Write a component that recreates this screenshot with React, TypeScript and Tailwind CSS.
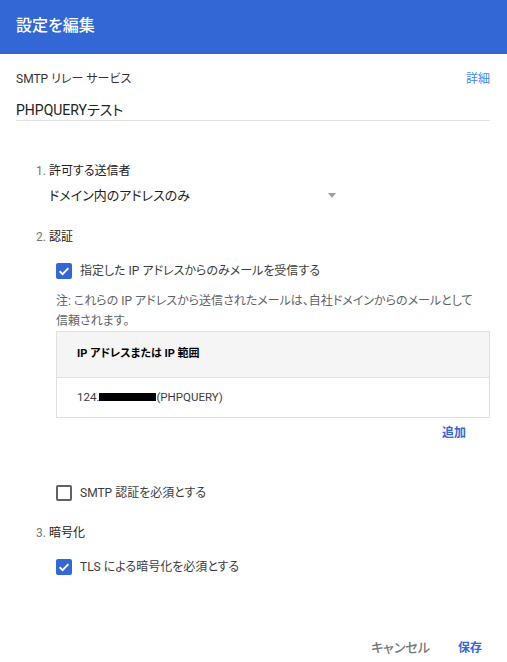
const palt = "[font-feature-settings:'palt']";

function Check({ on }: { on: boolean }) {
  if (!on) {
    return <span className="block h-4 w-4 shrink-0 rounded-[2px] border-2 border-[#616161] bg-white" />;
  }
  return (
    <span className="flex h-4 w-4 shrink-0 items-center justify-center rounded-[2px] bg-[#3367d6]">
      <svg viewBox="0 0 16 16" className="h-4 w-4" fill="none">
        <path d="M3.6 8.2 L6.6 11.1 L12.4 5.2" stroke="white" strokeWidth="1.9" />
      </svg>
    </span>
  );
}

function CheckRow({ on, label }: { on: boolean; label: string }) {
  return (
    <div className="flex h-5 items-center gap-2 pl-5">
      <Check on={on} />
      <span className="text-[12px] leading-5 text-[#3c3c3c]">{label}</span>
    </div>
  );
}

function StepLabel({ n, label }: { n: string; label: string }) {
  return (
    <div className="h-5 text-[12px] leading-5 text-[#212121]">
      <span className="text-[#757575]">{n}. </span>
      {label}
    </div>
  );
}

export default function App() {
  return (
    <div
      className={`h-[662px] w-[507px] bg-white ${palt}`}
      style={{ fontFamily: "Roboto, 'Noto Sans CJK JP', sans-serif" }}
    >
      <header className="flex h-[54px] items-center bg-[#3367d6] px-4 pb-[2px]">
        <h1 className="text-[16px] font-medium text-white">設定を編集</h1>
      </header>

      <div className="pl-4 pr-[17px]">
        <div className="mt-[15px] flex h-5 items-center justify-between text-[12px] leading-5">
          <span className="text-[#333]">SMTP リレー サービス</span>
          <a className="text-[#4285f4]">詳細</a>
        </div>
        <div className="mt-[11px] h-[21px] border-b border-[#e0e0e0] text-[14px] leading-5 text-[#212121]">
          PHPQUERYテスト
        </div>

        <div className="pl-5">
          <div className="mt-10">
            <StepLabel n="1" label="許可する送信者" />
          </div>
          <div className="mt-[5px] flex h-5 w-[300px] items-center justify-between pl-[13px]">
            <span className="text-[13px] leading-5 text-[#212121]">ドメイン内のアドレスのみ</span>
            <span className="mb-[2px] h-0 w-0 border-x-[4.5px] border-t-[5px] border-x-transparent border-t-[#9e9e9e]" />
          </div>

          <div className="mt-[21px]">
            <StepLabel n="2" label="認証" />
          </div>
          <div className="mt-[14px]">
            <CheckRow on label="指定した IP アドレスからのみメールを受信する" />
          </div>
          <div className="pl-5">
            <p className="mt-[10px] text-[12px] leading-5 text-[#5f6368]">
              注: これらの IP アドレスから送信されたメールは、自社ドメインからのメールとして
              <br />
              信頼されます。
            </p>
            <div className="border border-[#e0e0e0]">
              <div className="flex h-[46px] items-center border-b border-[#e0e0e0] bg-[#f5f5f5] px-5 text-[11px] font-bold text-black">
                IP アドレスまたは IP 範囲
              </div>
              <div className="flex h-[39px] items-center px-5 text-[11.5px] text-[#3c3c3c]">
                124.<span className="mb-px inline-block h-2 w-[57px] bg-black" />(PHPQUERY)
              </div>
            </div>
            <div className="mt-[5px] flex h-5 justify-end pr-6">
              <button className="text-[12px] font-bold leading-5 text-[#3367d6]">追加</button>
            </div>
          </div>

          <div className="mt-10">
            <CheckRow on={false} label="SMTP 認証を必須とする" />
          </div>

          <div className="mt-5">
            <StepLabel n="3" label="暗号化" />
          </div>
          <div className="mt-[14px]">
            <CheckRow on label="TLS による暗号化を必須とする" />
          </div>
        </div>

        <div className="mt-[61px] flex h-5 items-center justify-end gap-7 pr-2">
          <button className="text-[13px] font-medium leading-5 text-[#757575]">キャンセル</button>
          <button className="text-[12px] font-bold leading-5 text-[#3367d6]">保存</button>
        </div>
      </div>
    </div>
  );
}
